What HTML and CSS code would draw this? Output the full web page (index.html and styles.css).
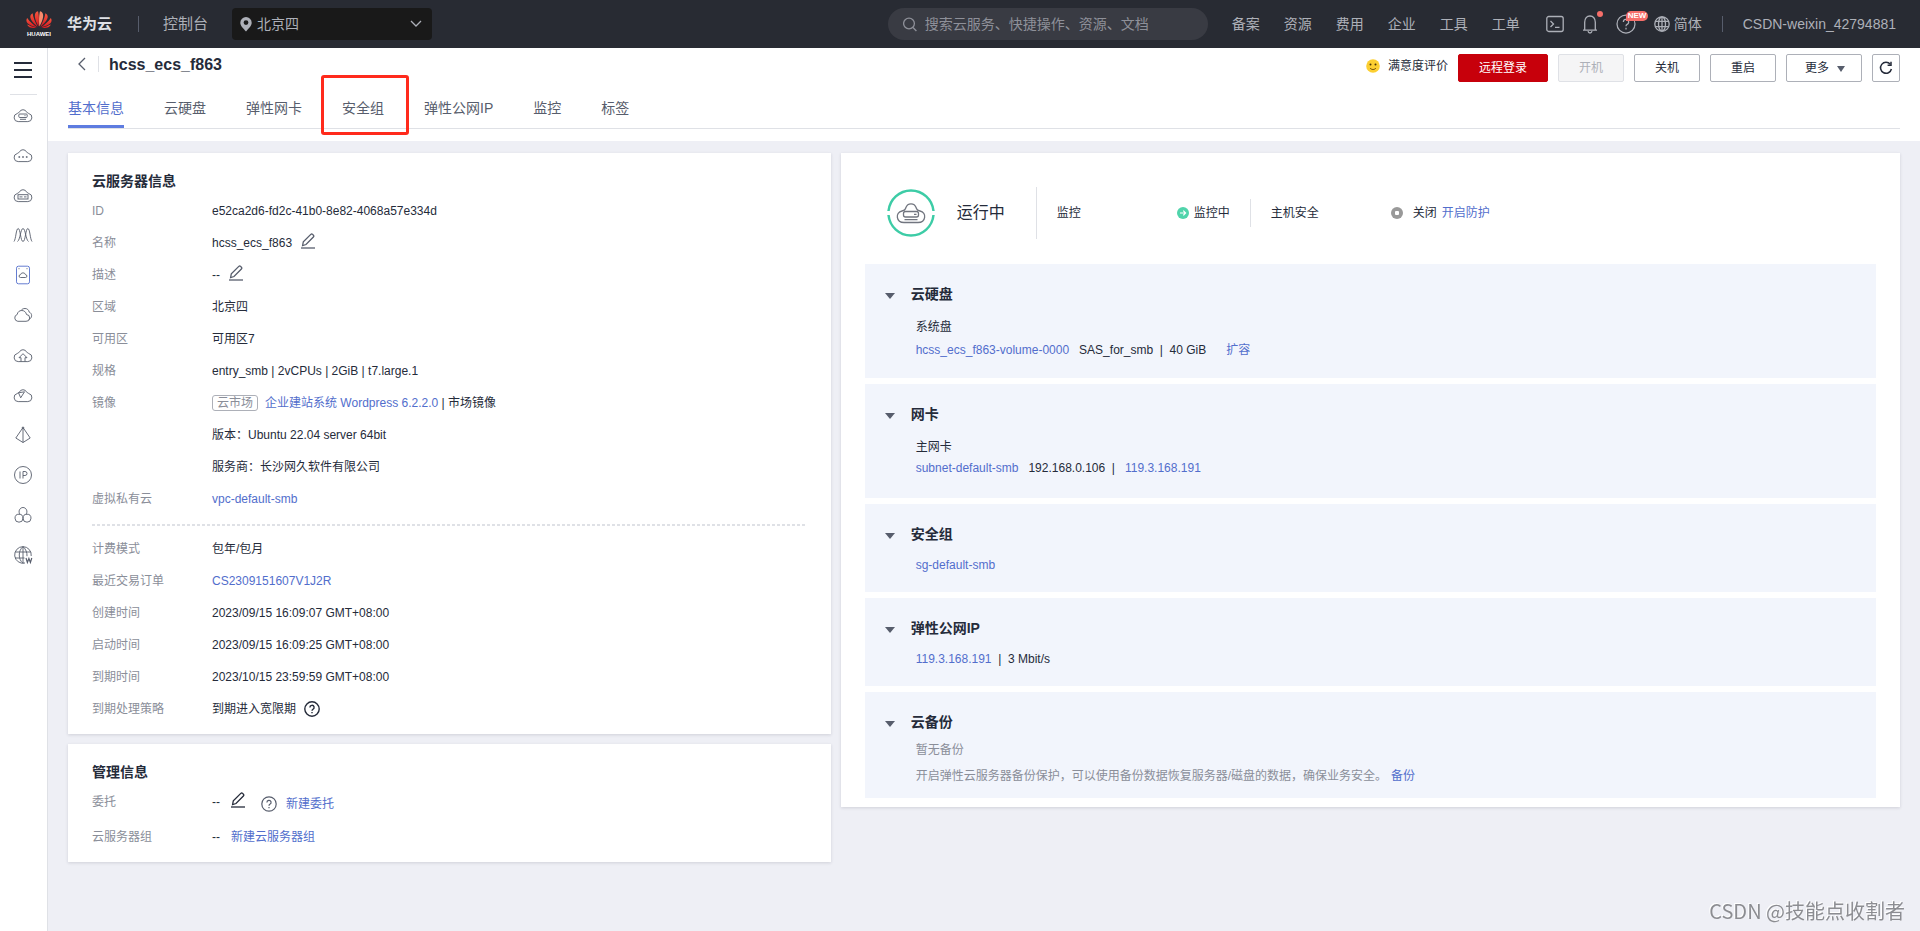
FILE: index.html
```html
<!DOCTYPE html>
<html lang="zh-CN">
<head>
<meta charset="utf-8">
<title>hcss_ecs_f863 - 华为云控制台</title>
<meta name="viewport" content="width=device-width, initial-scale=1">
<link rel="stylesheet" href="styles.css">
</head>
<body>
<svg class="sprite" aria-hidden="true">
  <symbol id="cloud" viewBox="0 0 20 20"><path d="M5.200 16.600a4.100 4.100 0 0 1-.9-8.100C5.200 7.500 6.300 7.600 6.300 7.200a4 4 0 0 1 7.400 0c0 .4 1.100.3 2 1.300a4.100 4.100 0 0 1-.9 8.100z"/></symbol>
  <symbol id="pencil" viewBox="0 0 14 16"><path d="M1.600 12.500l.7-3.600L9.800 1.400a1.300 1.300 0 0 1 1.800 0l.8.800a1.300 1.300 0 0 1 0 1.800L5 11.500z"/><path d="M0 15h14"/></symbol>
  <symbol id="help" viewBox="0 0 16 16"><circle cx="8" cy="8" r="7.200"/><path d="M5.900 6.400a2.100 2.100 0 1 1 3 1.900c-.7.400-.9.700-.9 1.500M8 11v1.300"/></symbol>
</svg>

<header class="topbar">
  <a class="logo" href="#">
    <svg width="26" height="17" viewBox="0 0 26 17">
      <defs><linearGradient id="petal" x1="0" y1="0" x2="0" y2="1"><stop offset="0" stop-color="#f4583f"/><stop offset="1" stop-color="#d9141e"/></linearGradient></defs>
      <g fill="url(#petal)">
        <path d="M12.600 15.500C10 11 8.300 6 9 3.200 9.400 1.300 10.900.3 12 .2c1 3 1.200 10 .6 15.300z"/>
        <path d="M13.400 15.500C16 11 17.700 6 17 3.200 16.600 1.300 15.100.3 14 .2c-1 3-1.200 10-.6 15.300z" fill="#f88a6c"/>
        <path d="M11.700 15.700C8 13.200 4.600 9 4.300 6.300 4.100 4.500 5.200 3 6.600 2.300c.6 4 2.600 9.200 5.100 13.400z"/>
        <path d="M14.300 15.700c3.700-2.500 7.100-6.700 7.400-9.400.2-1.800-.9-3.300-2.300-4-.6 4-2.600 9.200-5.100 13.400z"/>
        <path d="M11 16.200C7 15.600 2.400 13.700 1 11.500.1 10 .3 8.300 1.200 7c2.500 3.600 6 6.900 9.800 9.200z"/>
        <path d="M15 16.200c4-.6 8.600-2.500 10-4.700.9-1.500.7-3.200-.2-4.500-2.500 3.600-6 6.900-9.800 9.200z"/>
        <path d="M10.200 16.700c-2.600.5-5.200.4-6.700-.5-1.200-.7-1.900-1.500-2.200-2.600 2.800 1.500 5.800 2.500 8.900 3.100z"/>
        <path d="M15.800 16.700c2.600.5 5.200.4 6.700-.5 1.200-.7 1.900-1.500 2.200-2.600-2.800 1.500-5.800 2.500-8.900 3.100z"/>
      </g>
    </svg>
    <span class="logo-text">HUAWEI</span>
  </a>
  <a class="brand" href="#">华为云</a>
  <span class="bar-divider"></span>
  <a class="console" href="#">控制台</a>
  <button class="region" type="button">
    <svg width="12" height="15" viewBox="0 0 12 15"><path fill="#adb0b8" fill-rule="evenodd" d="M6 0a5.700 5.700 0 0 1 5.700 5.700C11.700 9 8.500 11.500 6 14.500 3.500 11.500.3 9 .3 5.700A5.700 5.700 0 0 1 6 0zm0 3.200a2.400 2.400 0 1 0 0 4.800 2.400 2.400 0 0 0 0-4.800z"/></svg>
    <span class="region-name">北京四</span>
    <svg class="line" width="12" height="8" viewBox="0 0 12 8"><path d="M1 1l5 5 5-5"/></svg>
  </button>

  <label class="search">
    <svg class="line" width="14" height="15" viewBox="0 0 14 15"><circle cx="6" cy="6.500" r="5.400"/><path d="M10 10.500l3.400 3.500"/></svg>
    <input type="text" aria-label="搜索" placeholder="搜索云服务、快捷操作、资源、文档">
  </label>
  <nav class="topnav">
    <a href="#">备案</a><a href="#">资源</a><a href="#">费用</a><a href="#">企业</a><a href="#">工具</a><a href="#">工单</a>
  </nav>
  <div class="tools">
    <button type="button" aria-label="CloudShell"><svg class="line" width="18" height="18" viewBox="0 0 18 18"><rect x=".8" y="1.500" width="16.400" height="15" rx="2"/><path d="M4.500 6l3 3-3 3M9 12.300h4.500"/></svg></button>
    <button type="button" aria-label="消息"><svg class="line" width="16" height="20" viewBox="0 0 16 20"><path d="M1 16.200h14M2.700 16V8.300C2.700 4.500 4.800 2 8 2s5.300 2.500 5.300 6.300V16M6 17.200c.3 1.300 1 1.800 2 1.800s1.700-.5 2-1.800"/></svg><span class="dot"></span></button>
    <button type="button" aria-label="帮助"><svg class="line thin" width="20" height="20" viewBox="0 0 16 16"><use href="#help"/></svg><span class="new">NEW</span></button>
    <button class="lang" type="button"><svg class="line" width="16" height="16" viewBox="0 0 16 16"><circle cx="8" cy="8" r="7.200"/><ellipse cx="8" cy="8" rx="3.500" ry="7.200"/><path d="M8 1v14M1.500 5.400h13M1.500 10.600h13"/></svg>简体</button>
  </div>
  <span class="bar-divider"></span>
  <a class="account" href="#">CSDN-weixin_42794881</a>
</header>

<div class="shell">
  <nav class="sidebar">
    <button class="menu" type="button" aria-label="菜单"><span></span><span></span><span></span></button>
    <a href="#" aria-label="云服务器"><svg viewBox="0 0 20 20"><use href="#cloud"/><rect x="5.800" y="9" width="8.400" height="3.500" rx="1"/><path d="M7 14.300h6M11.500 10.700h1"/></svg></a>
    <a href="#" aria-label="更多云服务"><svg viewBox="0 0 20 20"><use href="#cloud"/><path class="thick" d="M5.500 12h1.600M9.200 12h1.600M12.900 12h1.600"/></svg></a>
    <a href="#" aria-label="裸金属"><svg viewBox="0 0 20 20"><use href="#cloud"/><rect x="5" y="9.700" width="10" height="4.300"/><path d="M6.500 11.900h3M11 11.900h2.500"/></svg></a>
    <a href="#" aria-label="弹性伸缩"><svg viewBox="0 0 20 20"><path d="M1 16.500C3 14 3 3.500 5.200 3.500S7.500 16.500 10 16.500 12.600 3.500 14.800 3.500 17 14 19 16.500M4.500 16.500C7.200 15 7.600 3.500 10 3.500s2.800 11.500 5.500 13"/></svg></a>
    <a href="#" aria-label="云手机"><svg viewBox="0 0 20 20"><rect class="blue" x="3.500" y="1.200" width="13" height="17.600" rx="2"/><path d="M7.500 12.500a1.400 1.400 0 0 1 0-2.800 2.600 2.600 0 0 1 5 0 1.400 1.400 0 0 1 0 2.800zM5.500 3.700h1M13.500 3.700h1"/></svg></a>
    <a href="#" aria-label="多云"><svg viewBox="0 0 20 20"><path d="M4.800 16.300a3.500 3.500 0 0 1-.6-6.800C4.600 6.900 6.500 5.500 8.800 5.500s4.200 1.500 4.700 4a3.400 3.400 0 0 1-.5 6.800zM8 5.500c1-1.400 2.300-2 4-2 2.200 0 3.700 1.300 4.200 3.600 3.300 1.300 3.300 6-.5 7.400"/></svg></a>
    <a href="#" aria-label="云备份"><svg viewBox="0 0 20 20"><use href="#cloud"/><path d="M8 16.500v-3.800H6l4-4 4 4h-2v3.800"/></svg></a>
    <a href="#" aria-label="内容分发"><svg viewBox="0 0 20 20"><use href="#cloud"/><path d="M5.500 7.800l6-1-3.800 6z"/></svg></a>
    <a href="#" aria-label="网络"><svg viewBox="0 0 20 20"><path d="M10 2.500L2.800 13 10 17.500l7.200-4.500zM10 2.500v15"/><circle cx="10" cy="2.800" r=".8"/></svg></a>
    <a href="#" aria-label="弹性公网IP"><svg viewBox="0 0 20 20"><circle cx="10" cy="10" r="8.500"/><path d="M7 6.500v7M10 13.500v-7h2a2 2 0 0 1 0 4h-2"/></svg></a>
    <a href="#" aria-label="安全组"><svg viewBox="0 0 20 20"><path d="M7 9.500C4.800 6.400 6.800 2.500 10 2.500s5.200 3.900 3 7"/><circle cx="6" cy="13.200" r="4"/><circle cx="14" cy="13.200" r="4"/></svg></a>
    <a href="#" aria-label="域名"><svg viewBox="0 0 20 20"><path d="M12 18a8.300 8.300 0 1 1 6.200-7M2 7h16M2 13h9.500M10 1.700v16.600M10 1.700c-5 4-5 12.600 0 16.600M10 1.700c3 2.500 4.200 6 4 9.500"/><path class="bold" d="M13 13l1.400 4.500 1.500-4 1.500 4L18.800 13"/></svg></a>
  </nav>

  <main>
    <section class="page-head">
      <div class="title-row">
        <a class="back" href="#" aria-label="返回"><svg width="8" height="14" viewBox="0 0 8 14"><path d="M7 1L1 7l6 6"/></svg></a>
        <h1>hcss_ecs_f863</h1>
        <div class="actions">
          <a class="rate" href="#"><svg width="14" height="14" viewBox="0 0 14 14"><circle cx="7" cy="7" r="6.800" fill="#fccf31"/><path d="M4 9c1.500 2 4.500 2 6 0" fill="none" stroke="#6b4a08"/><circle cx="4.500" cy="5.500" r="1" fill="#4a3508"/><circle cx="9.500" cy="5.500" r="1" fill="#4a3508"/></svg>满意度评价</a>
          <button class="btn btn-primary" type="button">远程登录</button>
          <button class="btn" type="button" disabled>开机</button>
          <button class="btn" type="button">关机</button>
          <button class="btn" type="button">重启</button>
          <button class="btn btn-more" type="button">更多<span class="caret"></span></button>
          <button class="btn btn-icon" type="button" aria-label="刷新"><svg width="14" height="14" viewBox="0 0 14 14"><path d="M11.300 3.300A5.500 5.500 0 1 0 12.400 8"/><path d="M12 .8v3.400H8.600"/></svg></button>
        </div>
      </div>
      <nav class="tabs">
        <a class="active" href="#">基本信息</a><a href="#">云硬盘</a><a href="#">弹性网卡</a><a class="marked" href="#">安全组</a><a href="#">弹性公网IP</a><a href="#">监控</a><a href="#">标签</a>
      </nav>
    </section>

    <div class="content">
      <div class="column">
        <section class="card">
          <h2>云服务器信息</h2>
          <dl>
            <dt>ID</dt><dd>e52ca2d6-fd2c-41b0-8e82-4068a57e334d</dd>
            <dt>名称</dt><dd>hcss_ecs_f863<button class="edit" type="button" aria-label="修改名称"><svg><use href="#pencil"/></svg></button></dd>
            <dt>描述</dt><dd>--<button class="edit" type="button" aria-label="修改描述"><svg><use href="#pencil"/></svg></button></dd>
            <dt>区域</dt><dd>北京四</dd>
            <dt>可用区</dt><dd>可用区7</dd>
            <dt>规格</dt><dd>entry_smb | 2vCPUs | 2GiB | t7.large.1</dd>
            <dt>镜像</dt>
            <dd><span class="tag">云市场</span><span><a href="#">企业建站系统 Wordpress 6.2.2.0</a> | 市场镜像</span></dd>
            <dd>版本：Ubuntu 22.04 server 64bit</dd>
            <dd>服务商：长沙网久软件有限公司</dd>
            <dt>虚拟私有云</dt><dd><a href="#">vpc-default-smb</a></dd>
          </dl>
          <hr>
          <dl>
            <dt>计费模式</dt><dd>包年/包月</dd>
            <dt>最近交易订单</dt><dd><a href="#">CS2309151607V1J2R</a></dd>
            <dt>创建时间</dt><dd>2023/09/15 16:09:07 GMT+08:00</dd>
            <dt>启动时间</dt><dd>2023/09/15 16:09:25 GMT+08:00</dd>
            <dt>到期时间</dt><dd>2023/10/15 23:59:59 GMT+08:00</dd>
            <dt>到期处理策略</dt><dd>到期进入宽限期<svg class="help dark"><use href="#help"/></svg></dd>
          </dl>
        </section>
        <section class="card">
          <h2>管理信息</h2>
          <dl class="spaced">
            <dt>委托</dt><dd>--<button class="edit wide dark" type="button" aria-label="修改委托"><svg><use href="#pencil"/></svg></button><span class="agency"><svg class="help"><use href="#help"/></svg><a href="#">新建委托</a></span></dd>
            <dt>云服务器组</dt><dd>--<a class="after-dash" href="#">新建云服务器组</a></dd>
          </dl>
        </section>
      </div>

      <section class="card status-card">
        <div class="status">
          <svg class="ring" width="48" height="48" viewBox="0 0 48 48"><path class="green" d="M1.500 22A22.600 22.600 0 0 1 46.500 22M1.500 26A22.600 22.600 0 0 0 46.500 26"/><path d="M17 33.500c-8 0-9-10-2-11.500 3.500-.5 3.200-1.500 3.800-3.200 1.900-5.200 8.500-5.200 10.400 0 .6 1.700.3 2.700 3.800 3.200 7 1.500 6 11.500-2 11.500z"/><rect x="16.500" y="22.500" width="15" height="5.500" rx="2"/><path d="M27 25.300h2.500M17.500 30.700h13"/></svg>
          <span class="state">运行中</span>
          <div class="metric first"><span>监控</span><span class="value"><svg width="12" height="12" viewBox="0 0 12 12"><circle cx="6" cy="6" r="6" fill="#50d4ab"/><path d="M3 6h5.500M6.300 3.700L8.600 6 6.300 8.300" stroke="#fff" stroke-width="1.200" fill="none"/></svg>监控中</span></div>
          <div class="metric"><span>主机安全</span><span class="value off"><svg width="12" height="12" viewBox="0 0 12 12"><circle cx="6" cy="6" r="6" fill="#999"/><rect x="4" y="4" width="4" height="4" rx="1" fill="#fff"/></svg>关闭<a href="#">开启防护</a></span></div>
        </div>
        <div class="panels">
          <section class="panel">
            <h3><span class="caret"></span>云硬盘</h3>
            <p>系统盘</p>
            <p class="row"><a href="#">hcss_ecs_f863-volume-0000</a><span>SAS_for_smb&nbsp; |&nbsp; 40 GiB</span><a class="expand" href="#">扩容</a></p>
          </section>
          <section class="panel">
            <h3><span class="caret"></span>网卡</h3>
            <p>主网卡</p>
            <p class="row nic"><a href="#">subnet-default-smb</a><span>192.168.0.106&nbsp; |&nbsp;&nbsp; <a href="#">119.3.168.191</a></span></p>
          </section>
          <section class="panel single">
            <h3><span class="caret"></span>安全组</h3>
            <p><a href="#">sg-default-smb</a></p>
          </section>
          <section class="panel single">
            <h3><span class="caret"></span>弹性公网IP</h3>
            <p><a href="#">119.3.168.191</a>&nbsp; |&nbsp; 3 Mbit/s</p>
          </section>
          <section class="panel backup">
            <h3><span class="caret"></span>云备份</h3>
            <p>暂无备份</p>
            <p>开启弹性云服务器备份保护，可以使用备份数据恢复服务器/磁盘的数据，确保业务安全。<a href="#">备份</a></p>
          </section>
        </div>
      </section>
    </div>
  </main>
</div>
<div class="watermark">CSDN @技能点收割者</div>
</body>
</html>
```
FILE: styles.css
```css
* { box-sizing: border-box; }
body {
  margin: 0;
  min-height: 100vh;
  display: flex;
  flex-direction: column;
  background: #eeeff5;
  color: #252b3a;
  font: 12px/20px "Liberation Sans", "Noto Sans CJK SC", sans-serif;
}
a { color: #526ecc; text-decoration: none; }
button { font: inherit; color: inherit; border: 0; padding: 0; background: none; cursor: pointer; }
h1, h2, h3, p, dl, dd { margin: 0; }
svg { flex: none; fill: none; }
.sprite { position: absolute; width: 0; height: 0; }

/* top bar */
.topbar {
  height: 48px;
  display: flex;
  align-items: center;
  padding: 0 24px 0 26px;
  background: #282b33;
  color: #adb0b8;
  font-size: 14px;
  white-space: nowrap;
}
.topbar a { color: #adb0b8; }
.line { stroke: #adb0b8; stroke-width: 1.3; }
.line.thin { stroke-width: 1; }
.logo { display: flex; flex-direction: column; align-items: center; width: 26px; gap: 3px; }
.topbar .logo-text { color: #fff; font-size: 6px; font-weight: 700; line-height: 7px; }
.topbar .brand { margin-left: 15px; font-size: 15px; font-weight: 700; color: #dfe1e6; }
.bar-divider { width: 1px; height: 16px; background: #575d6c; }
.brand + .bar-divider { margin: 0 24px 0 26px; }
.console { font-size: 15px; }
.region {
  display: flex;
  align-items: center;
  width: 200px;
  height: 32px;
  margin-left: 24px;
  padding: 0 10px 0 8px;
  border-radius: 4px;
  background: #191919;
}
.region-name { flex: 1; margin-left: 5px; text-align: left; }
.search {
  display: flex;
  align-items: center;
  gap: 8px;
  width: 320px;
  height: 32px;
  margin-left: auto;
  padding: 0 15px;
  border-radius: 16px;
  background: #393b43;
}
.search input { flex: 1; min-width: 0; border: 0; padding: 0; outline: 0; background: none; color: #adb0b8; font: inherit; }
.search input::placeholder { color: #8e9099; }
.search .line { stroke: #8e9099; }
.topnav { display: flex; gap: 24px; margin-left: 24px; }
.tools { display: flex; align-items: center; gap: 18px; margin: 0 20px 0 26px; }
.tools button { position: relative; display: flex; align-items: center; }
.tools .lang { gap: 4px; }
.dot { position: absolute; top: -3px; right: -5px; width: 6px; height: 6px; border-radius: 50%; background: #f66f6a; }
.new {
  position: absolute;
  top: -3px;
  left: 10px;
  padding: 0 2px;
  border-radius: 5px 5px 5px 0;
  background: #f66f6a;
  color: #fff;
  font-size: 8px;
  font-weight: 700;
  line-height: 10px;
}
.account { margin-left: 20px; }

/* frame */
.shell { flex: 1; display: flex; }
.sidebar {
  width: 48px;
  flex: none;
  display: flex;
  flex-direction: column;
  align-items: center;
  padding-right: 1px;
  background: #fff;
  border-right: 1px solid #dfe1e6;
}
.menu {
  display: flex;
  flex-direction: column;
  align-items: center;
  gap: 5px;
  width: 27px;
  height: 47px;
  padding-top: 14px;
  border-bottom: 1px solid #dfe1e6;
}
.menu span { width: 18px; height: 2px; background: #252b3a; }
.sidebar a { display: flex; align-items: center; height: 40px; }
.sidebar svg { width: 20px; height: 20px; stroke: #575d6c; stroke-width: .9; }
.sidebar .thick { stroke-width: 1.6; }
.sidebar .bold { stroke-width: 1.2; }
.sidebar .blue { stroke: #526ecc; }
main { flex: 1; min-width: 0; }

.page-head { height: 93px; padding: 0 20px; background: #fff; }
.title-row { display: flex; align-items: flex-start; height: 40px; padding-top: 6px; }
.back { display: flex; align-items: center; height: 16px; margin-top: 2px; padding: 0 12px 0 10px; border-right: 1px solid #dfe1e6; }
.back svg { stroke: #575d6c; stroke-width: 1.3; }
h1 { margin-left: 10px; font-size: 16px; line-height: 22px; }
.actions { display: flex; gap: 10px; margin-left: auto; }
.rate { display: flex; align-items: center; gap: 8px; height: 24px; color: #252b3a; }
.btn {
  display: flex;
  align-items: center;
  justify-content: center;
  min-width: 66px;
  height: 28px;
  border: 1px solid #adb0b8;
  border-radius: 2px;
  background: #fff;
}
.btn:disabled { background: #f5f5f6; border-color: #dfe1e6; color: #adb0b8; }
.btn-primary { min-width: 90px; background: #c7000b; border-color: #c7000b; color: #fff; }
.btn-more { min-width: 76px; gap: 8px; padding-left: 2px; }
.btn-icon { min-width: 28px; }
.btn-icon svg { stroke: #252b3a; stroke-width: 1.5; }
.caret { border: 4px solid transparent; border-top: 6px solid #575d6c; border-bottom: 0; }
.btn .caret { margin-top: 2px; }
.tabs { display: flex; gap: 40px; height: 41px; border-bottom: 1px solid #dfe1e6; font-size: 14px; }
.tabs a { position: relative; padding-top: 10px; color: #575d6c; height: 40px; }
.tabs .active { color: #526ecc; border-bottom: 3px solid #5e7ce0; }
.tabs .marked::after {
  content: "";
  position: absolute;
  inset: -13px -25px -7px -21px;
  border: 3px solid #ff2a1c;
  border-radius: 3px;
}

/* cards */
.content {
  display: grid;
  grid-template-columns: 72fr 100fr;
  gap: 10px;
  align-items: start;
  padding: 12px 20px 20px;
}
.column { display: grid; gap: 10px; }
.card { padding: 18px 24px 9px; background: #fff; box-shadow: 0 1px 3px rgba(37, 43, 58, .15); }
h2 { margin-bottom: 4px; font-size: 14px; line-height: 20px; }
dl { display: grid; grid-template-columns: 120px 1fr; line-height: 32px; }
dl.spaced { row-gap: 3px; }
dt { color: #8a8e99; }
dd { grid-column: 2; display: flex; align-items: center; height: 32px; }
hr {
  height: 2px;
  margin: 9px 0 7px;
  border: 0;
  background: repeating-linear-gradient(90deg, #dfe1e6 0 3px, #fff 3px 5px);
}
.edit { display: flex; height: 20px; margin-left: 9px; }
.edit svg { width: 14px; height: 16px; stroke: #575d6c; stroke-width: 1.3; }
.edit.wide { margin-left: 11px; }
.edit.dark svg { stroke: #252b3a; }
.after-dash { margin-left: 11px; }
.help { width: 16px; height: 16px; stroke: #575d6c; stroke-width: 1.2; }
.help.dark { margin-left: 8px; stroke: #252b3a; stroke-width: 1.4; }
.agency { display: flex; align-items: center; gap: 9px; margin-left: 16px; padding-top: 4px; }
.tag { margin-right: 7px; padding: 0 4px; border: 1px solid #adb0b8; border-radius: 3px; color: #8a8e99; line-height: 14px; }

.status-card { padding-top: 34px; }
.status { display: flex; align-items: center; height: 52px; padding-left: 22px; }
.ring { stroke: #71757f; stroke-width: 1.3; }
.ring .green { stroke: #3dcca6; stroke-width: 2.5; }
.state { margin: 0 31px 0 22px; font-size: 16px; }
.metric { display: flex; align-items: center; justify-content: space-between; width: 240px; height: 28px; padding-left: 20px; border-left: 1px solid #dfe1e6; }
.metric.first { width: 214px; height: 52px; padding-right: 20px; }
.value { display: flex; align-items: center; gap: 5px; }
.value.off svg { margin-right: 5px; }

.panels { display: grid; gap: 6px; margin-top: 25px; }
.panel { min-height: 114px; padding: 20px 20px 16px; background: #f2f5fc; }
.panel.single { min-height: 88px; }
.panel.backup { min-height: 106px; padding-bottom: 10px; color: #8a8e99; }
h3 { display: flex; align-items: center; gap: 16px; margin-bottom: 13px; font-size: 14px; line-height: 20px; color: #252b3a; }
h3 .caret { border-width: 6px 5px 0; margin-top: 3px; }
.panel p { padding-left: 31px; }
.panel .row { display: flex; gap: 10px; margin-top: 3px; }
.panel .nic { margin-top: 1px; }
.row .expand { margin-left: 10px; }
.single h3 { margin-bottom: 11px; }
.backup h3 { margin-bottom: 8px; }
.backup p + p { margin-top: 6px; }
.backup a { margin-left: 4px; }

.watermark {
  position: fixed;
  right: 15px;
  bottom: 6px;
  color: #8c8d92;
  font: 20px/28px "Noto Sans CJK SC", sans-serif;
  text-shadow: -1px -1px 0 #fff;
}
```
